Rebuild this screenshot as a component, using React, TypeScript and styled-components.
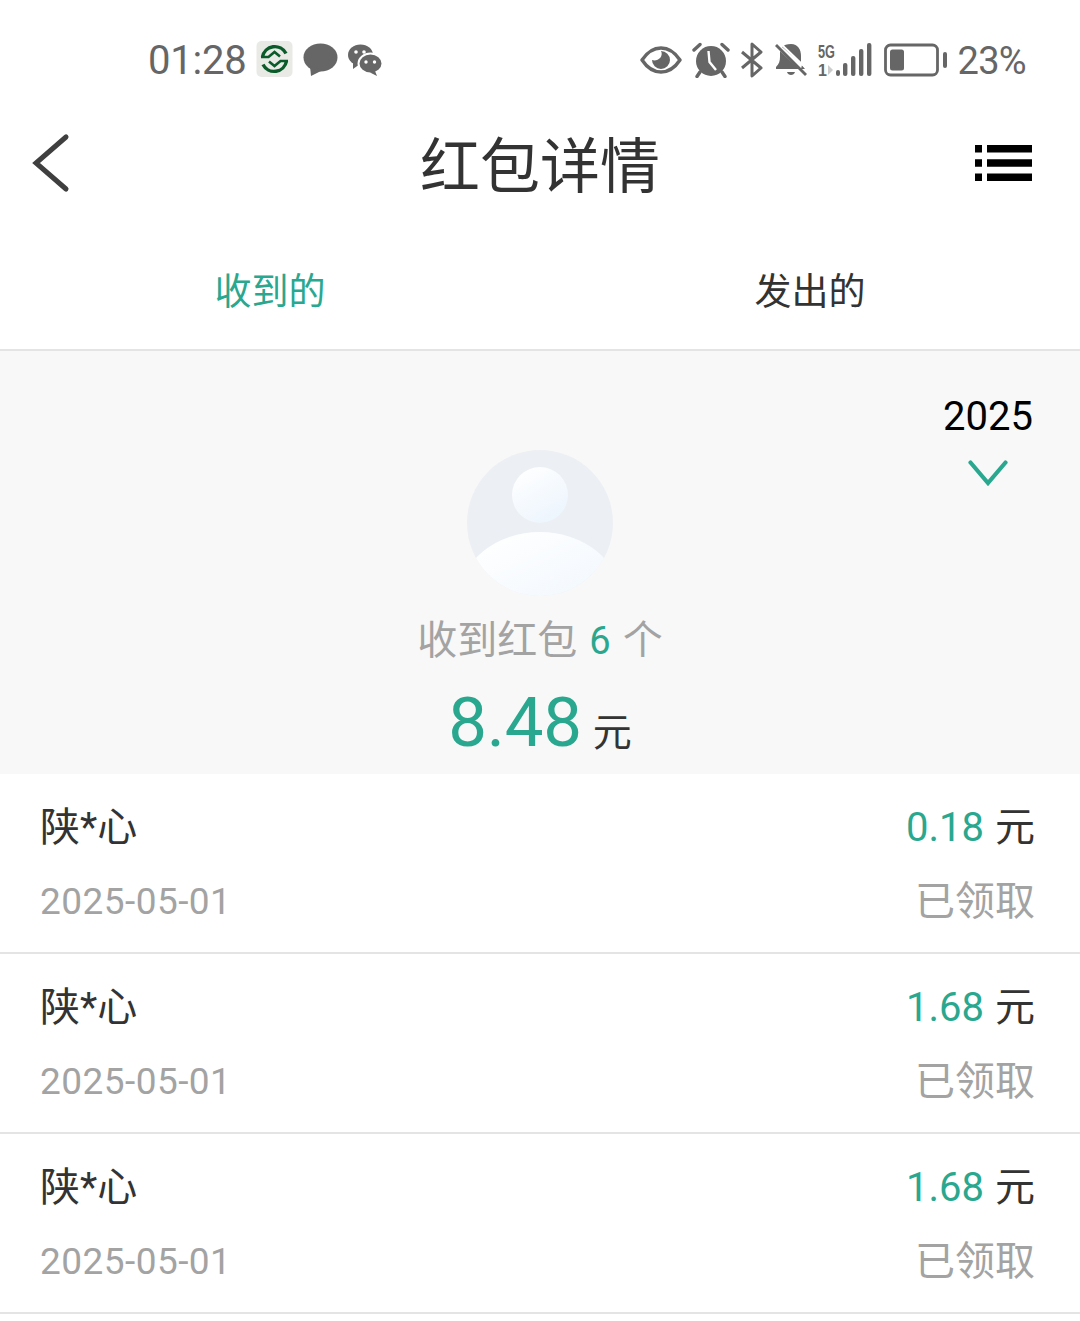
import React from "react";
import styled, { createGlobalStyle } from "styled-components";

const Global = createGlobalStyle`
  html, body { margin: 0; padding: 0; background: #fff; }
  body { font-family: Roboto, "Noto Sans CJK SC", sans-serif; }
`;
const CJK = `Roboto, "Noto Sans CJK SC", sans-serif`;
const GREEN = "#2aa88f";

const Page = styled.div`
  width: 1080px; height: 1321px; overflow: hidden; background: #fff; font-family: ${CJK};
`;
const StatusBar = styled.div`
  height: 120px; display: flex; align-items: center; justify-content: space-between;
  padding: 0 54px 0 148px; color: #666; box-sizing: border-box;
`;
const StatusGroup = styled.div<{ $gap: number }>`
  display: flex; align-items: center; gap: ${(p) => p.$gap}px;
`;
const Clock = styled.span`font-size: 40px; line-height: 46px; letter-spacing: -0.25px; padding-top: 2px;`;
const Battery = styled.span`font-size: 38px; line-height: 46px; letter-spacing: -0.7px; padding-top: 2px;`;
const Nav = styled.div`
  height: 90px; display: flex; align-items: center; justify-content: space-between;
  padding: 0 48px 4px 30px; box-sizing: border-box; position: relative;
`;
const Title = styled.h1`
  margin: 0; position: absolute; left: 0; right: 0; top: 3px; text-align: center;
  font-size: 60px; line-height: 90px; font-weight: 400; color: #333; pointer-events: none;
`;
const Tabs = styled.div`
  height: 141px; display: grid; grid-template-columns: 1fr 1fr; align-items: center;
  border-bottom: 2px solid #e4e4e4; box-sizing: border-box; padding-top: 27px;
`;
const Tab = styled.div<{ $active?: boolean }>`
  text-align: center; font-size: 37px; line-height: 50px; color: ${(p) => (p.$active ? GREEN : "#333")};
`;
const Summary = styled.section`
  height: 423px; background: #f8f8f8; box-sizing: border-box; padding-top: 40px;
  position: relative; display: flex; flex-direction: column; align-items: center;
`;
const YearPick = styled.div`
  position: absolute; right: 47px; top: 43px; display: flex; flex-direction: column; align-items: center; gap: 20px;
`;
const Year = styled.div`font-size: 40px; line-height: 46px; color: #000;`;
const Avatar = styled.div`margin-top: 58px; height: 148px;`;
const Received = styled.div`
  margin-top: 19px; font-size: 40px; line-height: 50px; color: #a3a3a3; display: flex; align-items: center; gap: 12px;
`;
const Count = styled.span`color: ${GREEN}; font-size: 38px;`;
const Total = styled.div`
  margin-top: 19px; display: flex; align-items: baseline; gap: 11px; color: #333; font-size: 39px; line-height: 76px;
`;
const TotalNum = styled.span`color: ${GREEN}; font-size: 69px; letter-spacing: -0.2px;`;
const Row = styled.div`
  height: 180px; box-sizing: border-box; border-bottom: 2px solid #e4e4e4; padding: 29px 45px 0 40px;
  display: grid; grid-template-columns: 1fr auto; grid-template-rows: 50px 50px; row-gap: 24px; align-items: center;
`;
const Name = styled.div`font-size: 40px; line-height: 50px; color: #333;`;
const Amount = styled.div`font-size: 40px; line-height: 50px; color: #333; text-align: right;`;
const AmountNum = styled.span`color: ${GREEN}; margin-right: 11px;`;
const RowDate = styled.div`font-size: 37px; line-height: 50px; color: #a3a3a3; letter-spacing: 0.45px;`;
const Claimed = styled.div`font-size: 40px; line-height: 50px; color: #a3a3a3; text-align: right;`;

const AppIcon = () => (
  <svg width="37" height="38" viewBox="0 0 37 38">
    <rect width="36" height="36" x="0.5" y="0" rx="5" fill="#e9e9e6" />
    <g fill="none" stroke="#0b5b2a" strokeWidth="3.4">
      <path d="M6.5 16 A12.5 12.5 0 0 1 30 12.5" />
      <path d="M30.5 20 A12.5 12.5 0 0 1 7 23.5" />
      <path d="M5 16 H12.5 L18.5 11 L24 15.5" strokeWidth="2.6" />
      <path d="M32 20 H24.5 L18.5 25 L13 20.5" strokeWidth="2.6" />
    </g>
  </svg>
);
const Bubble = () => (
  <svg width="35" height="34" viewBox="0 0 35 34">
    <ellipse cx="17.5" cy="14.5" rx="17" ry="14" fill="#666" />
    <path d="M7 23 L8 33 L20 27 Z" fill="#666" />
  </svg>
);
const WeChat = () => (
  <svg width="34" height="32" viewBox="0 0 34 32">
    <ellipse cx="12.5" cy="11" rx="12.5" ry="10.5" fill="#666" />
    <path d="M5 18 L5 25 L12 20 Z" fill="#666" />
    <ellipse cx="22.5" cy="19.5" rx="12" ry="10" fill="#666" stroke="#fff" strokeWidth="2" />
    <path d="M27 27 L29 32 L22 28.5 Z" fill="#666" />
    <circle cx="8" cy="8" r="1.8" fill="#fff" /><circle cx="16" cy="8" r="1.8" fill="#fff" />
    <circle cx="18" cy="18" r="1.7" fill="#fff" /><circle cx="26.5" cy="18" r="1.7" fill="#fff" />
  </svg>
);
const Eye = () => (
  <svg width="42" height="30" viewBox="0 0 42 30">
    <path d="M2 15 C8 6 14 3 21 3 C28 3 34 6 40 15 C34 24 28 27 21 27 C14 27 8 24 2 15 Z" fill="none" stroke="#666" strokeWidth="3.4" strokeLinejoin="round" />
    <path d="M21 6 A9 9 0 1 1 12 15 C17 17 24 12 21 6 Z" fill="#666" />
  </svg>
);
const Alarm = () => (
  <svg width="38" height="36" viewBox="0 0 38 36">
    <circle cx="19" cy="19" r="15" fill="#666" />
    <path d="M2 8 L8 2.5 M36 8 L30 2.5 M8 30 L5 34.5 M30 30 L33 34.5" stroke="#666" strokeWidth="3.4" strokeLinecap="round" />
    <path d="M16.5 9 L17.5 20 L24 28" fill="none" stroke="#fff" strokeWidth="2.4" />
  </svg>
);
const Bluetooth = () => (
  <svg width="24" height="36" viewBox="0 0 24 36">
    <path d="M2 10 L21 26 L12 34 L12 2 L21 10 L2 26" fill="none" stroke="#666" strokeWidth="3" strokeLinejoin="round" />
  </svg>
);
const BellOff = () => (
  <svg width="34" height="36" viewBox="0 0 34 36">
    <path d="M17 2 C24 2 27 8 27 14 L27 21 L8 5 C10 3 13 2 17 2 Z" fill="#666" />
    <path d="M6 9 L25 27 L2 27 L2 25 C5 22 6 19 6 15 Z" fill="#666" />
    <path d="M28 23 L31 27 L27 27 Z" fill="#666" />
    <path d="M13 30 L21 30 C20 34 14 34 13 30 Z" fill="#666" />
    <path d="M2 3 L32 33" stroke="#666" strokeWidth="2.8" />
    <path d="M6 1 L33 27" stroke="#fff" strokeWidth="2" />
  </svg>
);
const Signal = () => (
  <svg width="54" height="38" viewBox="0 0 54 38">
    <text x="0" y="17" fontFamily="Liberation Sans, sans-serif" fontSize="19" fontWeight="700" fill="#666" textLength="17" lengthAdjust="spacingAndGlyphs">5G</text>
    <text x="0" y="35" fontFamily="Liberation Sans, sans-serif" fontSize="16" fontWeight="700" fill="#666">1</text>
    <path d="M10 24 L15 29 L10 34 Z" fill="#ccc" />
    <rect x="18" y="29" width="4" height="6" rx="2" fill="#666" />
    <rect x="25" y="22" width="4.4" height="13" rx="2" fill="#666" />
    <rect x="33" y="15" width="4.4" height="20" rx="2" fill="#666" />
    <rect x="41" y="8" width="4.4" height="27" rx="2" fill="#666" />
    <rect x="49" y="2" width="4.4" height="33" rx="2" fill="#666" />
  </svg>
);
const BatteryIcon = () => (
  <svg width="64" height="34" viewBox="0 0 64 34">
    <rect x="1.5" y="2" width="52" height="30" rx="5" fill="none" stroke="#666" strokeWidth="2.8" />
    <rect x="6" y="6.5" width="14" height="21" rx="2.5" fill="#666" />
    <rect x="59" y="9" width="4" height="16" rx="2" fill="#666" />
  </svg>
);
const Back = () => (
  <svg width="42" height="60" viewBox="0 0 42 60">
    <path d="M36 4 L6 30 L36 56" fill="none" stroke="#3f3f3f" strokeWidth="5" strokeLinecap="round" />
  </svg>
);
const ListIcon = () => (
  <svg width="57" height="36" viewBox="0 0 57 36">
    <path d="M0 3.7 H7 M12 3.7 H57 M0 18 H7 M12 18 H57 M0 32.3 H7 M12 32.3 H57" stroke="#000" strokeWidth="7.4" />
  </svg>
);
const Chevron = () => (
  <svg width="40" height="26" viewBox="0 0 40 26">
    <path d="M2.5 2.5 L20 23 L37.5 2.5" fill="none" stroke={GREEN} strokeWidth="4.2" strokeLinecap="round" />
  </svg>
);
const AvatarIcon = () => (
  <svg width="148" height="148" viewBox="0 0 148 148">
    <defs>
      <linearGradient id="fade" x1="0.2" y1="0" x2="0.8" y2="1">
        <stop offset="0" stopColor="#fff" />
        <stop offset="1" stopColor="#ebf4fd" />
      </linearGradient>
      <clipPath id="disc"><circle cx="74" cy="74" r="73" /></clipPath>
    </defs>
    <circle cx="74" cy="74" r="73" fill="#eceff3" />
    <circle cx="74" cy="46" r="28" fill="url(#fade)" />
    <ellipse cx="74" cy="148" rx="80" ry="65" fill="url(#fade)" clipPath="url(#disc)" />
  </svg>
);

const rows = ["0.18", "1.68", "1.68"];

export default function App() {
  return (
    <Page>
      <Global />
      <StatusBar>
        <StatusGroup $gap={10}>
          <Clock>01:28</Clock>
          <AppIcon />
          <Bubble />
          <WeChat />
        </StatusGroup>
        <StatusGroup $gap={12}>
          <StatusGroup $gap={10}>
            <Eye />
            <Alarm />
            <Bluetooth />
            <BellOff />
            <Signal />
          </StatusGroup>
          <StatusGroup $gap={10}>
            <BatteryIcon />
            <Battery>23%</Battery>
          </StatusGroup>
        </StatusGroup>
      </StatusBar>
      <Nav>
        <Back />
        <Title>红包详情</Title>
        <ListIcon />
      </Nav>
      <Tabs>
        <Tab $active>收到的</Tab>
        <Tab>发出的</Tab>
      </Tabs>
      <Summary>
        <YearPick>
          <Year>2025</Year>
          <Chevron />
        </YearPick>
        <Avatar><AvatarIcon /></Avatar>
        <Received>
          <span>收到红包</span>
          <Count>6</Count>
          <span>个</span>
        </Received>
        <Total>
          <TotalNum>8.48</TotalNum>
          <span>元</span>
        </Total>
      </Summary>
      {rows.map((v, i) => (
        <Row key={i}>
          <Name>陕*心</Name>
          <Amount><AmountNum>{v}</AmountNum>元</Amount>
          <RowDate>2025-05-01</RowDate>
          <Claimed>已领取</Claimed>
        </Row>
      ))}
    </Page>
  );
}
